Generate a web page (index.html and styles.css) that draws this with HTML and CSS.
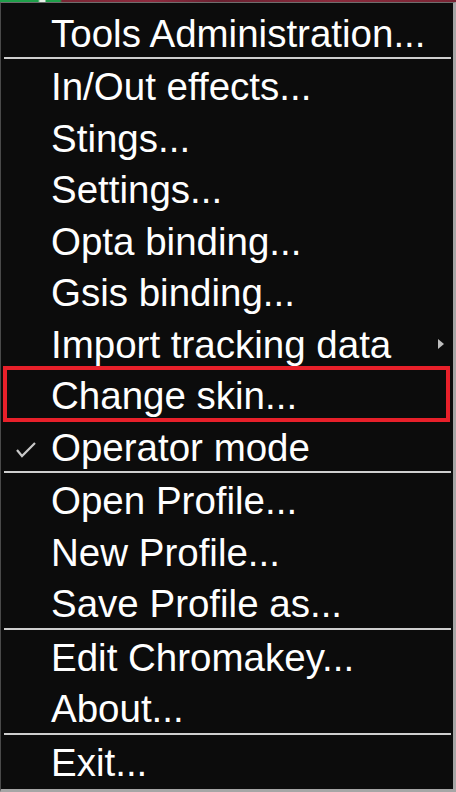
FILE: index.html
```html
<!DOCTYPE html>
<html>
<head>
<meta charset="utf-8">
<link rel="stylesheet" href="styles.css">
</head>
<body>
<div class="strip"></div>
<div class="menu">
  <div class="item">Tools Administration...</div>
  <div class="sep"></div>
  <div class="item">In/Out effects...</div>
  <div class="item">Stings...</div>
  <div class="item">Settings...</div>
  <div class="item">Opta binding...</div>
  <div class="item">Gsis binding...</div>
  <div class="item has-sub">Import tracking data<span class="arrow"></span></div>
  <div class="item highlighted">Change skin...</div>
  <div class="item checked"><svg class="check" width="22" height="18" viewBox="0 0 22 18"><polyline points="2,9 7,15 20,2" fill="none" stroke="#c8c8c8" stroke-width="2.2"/></svg>Operator mode</div>
  <div class="sep"></div>
  <div class="item">Open Profile...</div>
  <div class="item">New Profile...</div>
  <div class="item">Save Profile as...</div>
  <div class="sep"></div>
  <div class="item">Edit Chromakey...</div>
  <div class="item">About...</div>
  <div class="sep"></div>
  <div class="item">Exit...</div>
</div>
</body>
</html>
```
FILE: styles.css
```css
html, body {
  margin: 0;
  padding: 0;
  background: #0c0c0c;
}
body {
  width: 456px;
  height: 792px;
  overflow: hidden;
  font-family: "Liberation Sans", Arial, sans-serif;
}
.strip {
  height: 2px;
  background: linear-gradient(to right, #1fa04a 0, #1fa04a 38px, #e8f0e8 40px, #e8f0e8 45px, #1fa04a 46px, #1fa04a 60px, #7a2634 62px, #8e2a3e 150px, #6a2030 220px, #8a2a3c 330px, #7a2434 456px);
}
.menu {
  box-sizing: border-box;
  height: 790px;
  border-top: 1px solid #6e6e6e;
  border-left: 1px solid #4a4a4a;
  border-right: 3px solid #a6a6a6;
  border-bottom: 3px solid #a6a6a6;
  padding: 2.6px 2px 0 0;
  background: #0c0c0c;
  display: flex;
  flex-direction: column;
}
.item {
  position: relative;
  box-sizing: border-box;
  height: 51.5px;
  padding-top: 4px;
  line-height: 47.5px;
  padding-left: 50px;
  color: #ffffff;
  font-size: 38.5px;
  white-space: nowrap;
  flex: none;
}
.sep {
  height: 2px;
  margin-left: 3px;
  background: #cfcfcf;
  flex: none;
}
.highlighted::after {
  content: "";
  position: absolute;
  left: 2px;
  right: 1px;
  top: -2px;
  bottom: -2px;
  border: 4px solid #e8202a;
}
.check {
  position: absolute;
  left: 14px;
  top: 21px;
}
.arrow {
  position: absolute;
  left: 437px;
  top: 22px;
  width: 0;
  height: 0;
  border-top: 5px solid transparent;
  border-bottom: 5px solid transparent;
  border-left: 6px solid #bdbdbd;
}
```
